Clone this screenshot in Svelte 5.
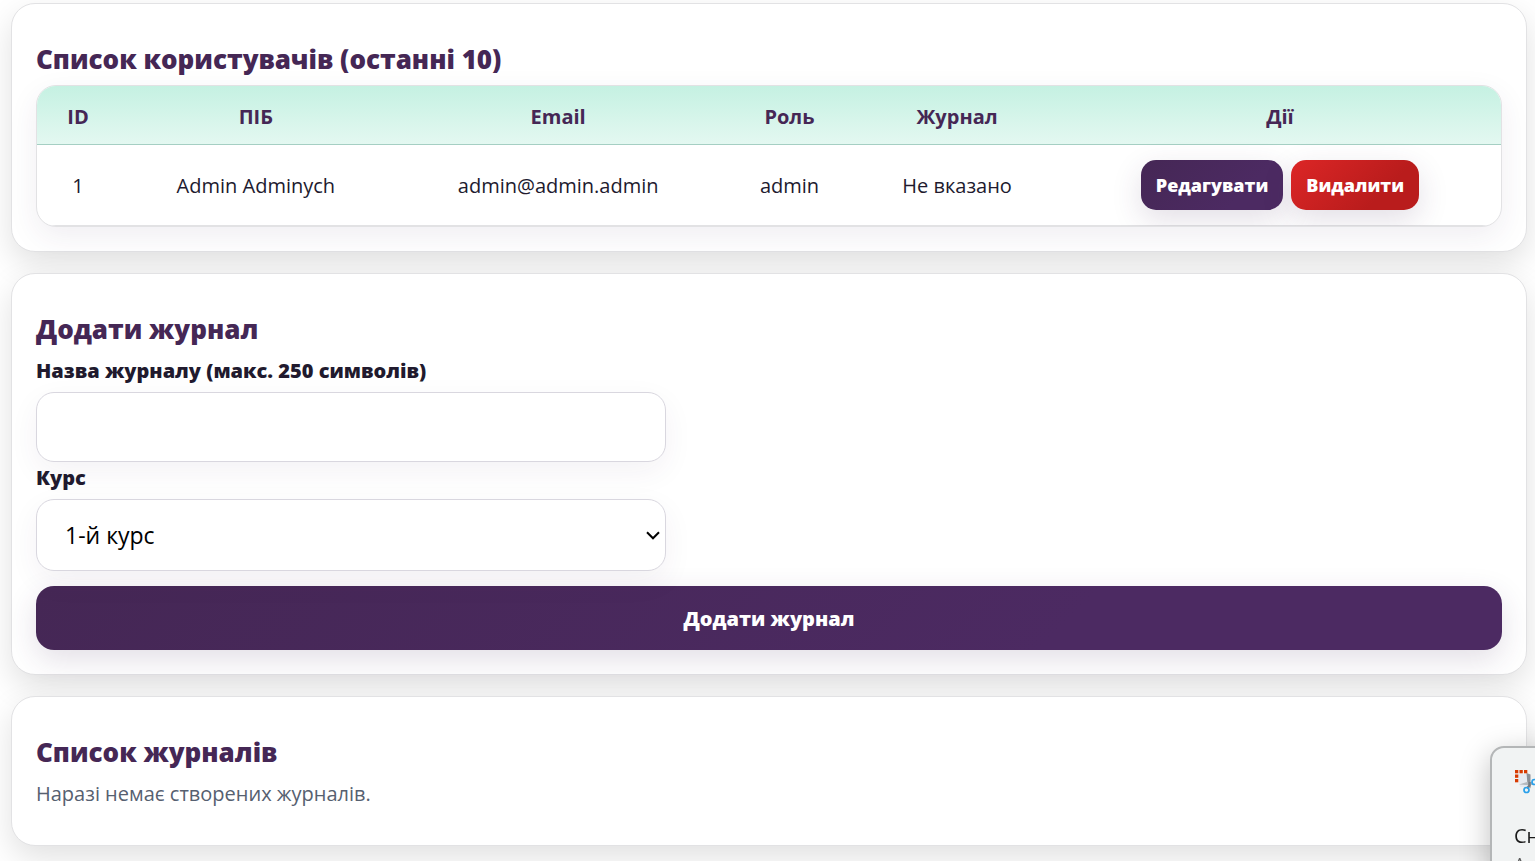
<script>
	let title = '';
	let course = '1';

	const users = [
		{ id: 1, name: 'Admin Adminych', email: 'admin@admin.admin', role: 'admin', journal: 'Не вказано' }
	];
	const courses = ['1', '2', '3', '4'];
</script>

<main>
	<section class="card">
		<h2>Список користувачів (останні 10)</h2>
		<div class="table-wrap">
			<table>
				<colgroup>
					<col class="c-id" />
					<col class="c-name" />
					<col class="c-email" />
					<col class="c-role" />
					<col class="c-journal" />
					<col />
				</colgroup>
				<thead>
					<tr>
						<th>ID</th>
						<th>ПІБ</th>
						<th>Email</th>
						<th>Роль</th>
						<th>Журнал</th>
						<th>Дії</th>
					</tr>
				</thead>
				<tbody>
					{#each users as user (user.id)}
						<tr>
							<td>{user.id}</td>
							<td>{user.name}</td>
							<td>{user.email}</td>
							<td>{user.role}</td>
							<td>{user.journal}</td>
							<td class="cell-actions">
								<div class="actions">
									<button type="button" class="btn small">Редагувати</button>
									<button type="button" class="btn small danger">Видалити</button>
								</div>
							</td>
						</tr>
					{/each}
				</tbody>
			</table>
		</div>
	</section>

	<section class="card">
		<h2>Додати журнал</h2>
		<form on:submit|preventDefault>
			<label for="title">Назва журналу (макс. 250 символів)</label>
			<input id="title" type="text" maxlength="250" bind:value={title} />
			<label for="course">Курс</label>
			<div class="select-wrap">
				<select id="course" bind:value={course}>
					{#each courses as c}
						<option value={c}>{c}-й курс</option>
					{/each}
				</select>
				<svg class="chevron" width="14" height="9" viewBox="0 0 14 9" fill="none">
					<path d="M1 1.300l6 6 6-6" stroke="#000" stroke-width="2" />
				</svg>
			</div>
			<button type="submit" class="btn wide">Додати журнал</button>
		</form>
	</section>

	<section class="card">
		<h2>Список журналів</h2>
		<p class="empty">Наразі немає створених журналів.</p>
	</section>
</main>

<aside class="toast">
	<svg width="30" height="26" viewBox="0 0 30 26" fill="none">
		<path d="M4 4h9l3 2v8l-4 3H6z" fill="#e6eaf1" />
		<path d="M12.500 3l4 1.500v14l-3-4z" fill="#8b9097" />
		<path d="M5 14.500l8-2.500h6v3h-6z" fill="#b3b8be" />
		<path d="M15.500 12v3.500l-2.500 3" stroke="#747b83" stroke-width="2.500" />
		<g fill="#d83b01">
			<rect x="1" y="0" width="3.300" height="3.300" />
			<rect x="5.500" y="0" width="3.300" height="3.300" />
			<rect x="10" y="0" width="3.300" height="3.300" />
			<rect x="1" y="4.500" width="3.300" height="3.300" />
			<rect x="1" y="9" width="3.300" height="3.300" />
		</g>
		<circle cx="12.500" cy="20" r="2.500" stroke="#2aa0ea" stroke-width="1.700" />
		<circle cx="20.500" cy="12" r="2.500" stroke="#2aa0ea" stroke-width="1.700" />
	</svg>
	<div class="toast-title">Сн</div>
	<div class="toast-text">А</div>
</aside>

<style>
	:global(body) {
		background: #fff;
		color: #211a2e;
		font-family: 'Segoe UI', 'Open Sans', 'Noto Sans', sans-serif;
		font-size: 20px;
		line-height: 32px;
		overflow: hidden;
	}
	main {
		display: flex;
		flex-direction: column;
		gap: 21px;
		padding: 3px 8px 15px 11px;
	}
	.card {
		padding: 24px;
		background: #fff;
		border: 1px solid #e2e2e4;
		border-radius: 24px;
		box-shadow: 0 12px 32px rgba(0, 0, 0, 0.12);
	}
	h2 {
		margin: 12px 0 7px;
		color: #452755;
		font-size: 26px;
		font-weight: 800;
		line-height: 38px;
	}
	.table-wrap {
		overflow: hidden;
		border: 1px solid #e2e2e4;
		border-radius: 20px;
		background: #fff;
		box-shadow: 0 10px 30px rgba(69, 39, 85, 0.08);
	}
	table {
		width: 100%;
		table-layout: fixed;
		border-collapse: separate;
		border-spacing: 0;
		text-align: center;
	}
	.c-id { width: 5.6%; }
	.c-name { width: 18.7%; }
	.c-email { width: 22.6%; }
	.c-role { width: 9%; }
	.c-journal { width: 13.9%; }
	thead {
		background: linear-gradient(180deg, #c5f1e2, #e4f8f1);
	}
	th {
		padding: 15px 0 11px;
		border-bottom: 1px solid #a5cfc3;
		color: #452755;
		font-weight: 700;
	}
	td {
		padding: 17px 0 15px;
		border-bottom: 1px solid #e2e2e4;
	}
	.cell-actions {
		padding: 15px 0;
	}
	.actions {
		display: flex;
		justify-content: center;
		gap: 8px;
	}
	.btn {
		padding: 0 15px;
		border: 0;
		border-radius: 18px;
		background: linear-gradient(135deg, #452755, #4c2a62 70%);
		box-shadow: 0 10px 30px rgba(69, 39, 85, 0.15);
		color: #fff;
		font-family: inherit;
		font-size: 20px;
		font-weight: 800;
		cursor: pointer;
	}
	.small {
		height: 50px;
		border-radius: 15px;
		font-size: 18px;
	}
	.danger {
		background: linear-gradient(135deg, #dc2626, #b91c1c 70%);
	}
	.wide {
		width: 100%;
		height: 64px;
		margin-top: 15px;
	}
	form {
		display: flex;
		flex-direction: column;
	}
	label {
		margin-bottom: 5px;
		font-weight: 800;
	}
	input,
	select {
		box-sizing: border-box;
		width: 100%;
		max-width: 630px;
		height: 70px;
		padding: 0 28px;
		border: 1px solid #d9d7df;
		border-radius: 18px;
		background: #fff;
		box-shadow: 0 10px 30px rgba(69, 39, 85, 0.06);
		color: #000;
		font-family: inherit;
		font-size: 23px;
	}
	.select-wrap {
		position: relative;
		display: flex;
		max-width: 630px;
	}
	select {
		appearance: none;
		height: 72px;
	}
	.chevron {
		position: absolute;
		top: 32px;
		right: 6px;
		pointer-events: none;
	}
	.empty {
		margin: 0 0 11px;
		color: #566070;
	}
	.toast {
		position: fixed;
		right: -320px;
		bottom: -40px;
		box-sizing: border-box;
		width: 365px;
		height: 155px;
		padding: 22px;
		border: 2px solid #b4b6b7;
		border-radius: 14px;
		background: #f1f3f3;
		box-shadow: 0 8px 30px rgba(0, 0, 0, 0.25);
		color: #1b1b1b;
	}
	.toast svg {
		display: block;
	}
	.toast-title {
		margin-top: 24px;
		line-height: 32px;
	}
	.toast-text {
		color: #5d5d5d;
		font-size: 18px;
		line-height: 24px;
	}
</style>
